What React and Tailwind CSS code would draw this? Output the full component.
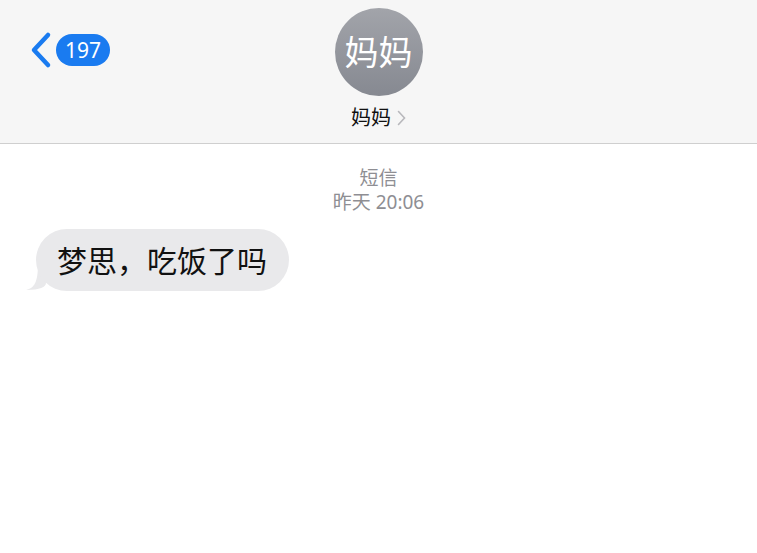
import React from "react";

const FONT = { fontFamily: '"Noto Sans", "Noto Sans CJK SC", sans-serif' };

export default function App() {
  return (
    <div className="w-[757px] h-[553px] bg-white overflow-hidden" style={FONT}>
      {/* Header */}
      <div className="relative h-[144px] bg-[#f6f6f6] border-b border-[#cfcfcf] flex flex-col items-center">
        <div className="absolute left-[28px] top-[31px] flex items-center gap-[2px]">
          <svg width="26" height="38" viewBox="0 0 26 38">
            <path
              d="M20 4 L6 19 L20 34"
              fill="none"
              stroke="#1a7bf0"
              strokeWidth="4.5"
              strokeLinecap="round"
              strokeLinejoin="round"
            />
          </svg>
          <div className="h-[32px] px-[9px] rounded-full bg-[#1a7bf0] text-white text-[21px] leading-[32px] flex items-center">
            197
          </div>
        </div>

        <div className="mt-[8px] w-[88px] h-[88px] rounded-full bg-gradient-to-b from-[#a2a4aa] to-[#868991] flex items-center justify-center text-white text-[34px] leading-none">
          妈妈
        </div>
        <div className="mt-[9px] flex items-center gap-[6px] text-[20px] text-[#111] leading-[26px]">
          <span>妈妈</span>
          <svg width="9" height="16" viewBox="0 0 9 16">
            <path d="M1.5 1.5 L7.5 8 L1.5 14.5" fill="none" stroke="#b8b8bc" strokeWidth="1.6" strokeLinecap="round" />
          </svg>
        </div>
      </div>

      {/* Body */}
      <div className="flex flex-col items-center pt-[22px] text-[#8e8e93] text-[19px] leading-[24px]">
        <div>短信</div>
        <div>昨天 20:06</div>
      </div>

      <div className="relative mt-[15px] ml-[36px] w-fit">
        <svg className="absolute left-[-10px] bottom-0" width="30" height="28" viewBox="0 0 30 28">
          <path d="M20 0 L20 20 C20 24 14 27 0 27 C8 25 12 20 12 0 Z" fill="#e9e9eb" />
        </svg>
        <div className="relative h-[62px] pl-[21px] pr-[22px] rounded-full bg-[#e9e9eb] flex items-center text-[30px] text-[#111]">
          梦思，吃饭了吗
        </div>
      </div>
    </div>
  );
}
